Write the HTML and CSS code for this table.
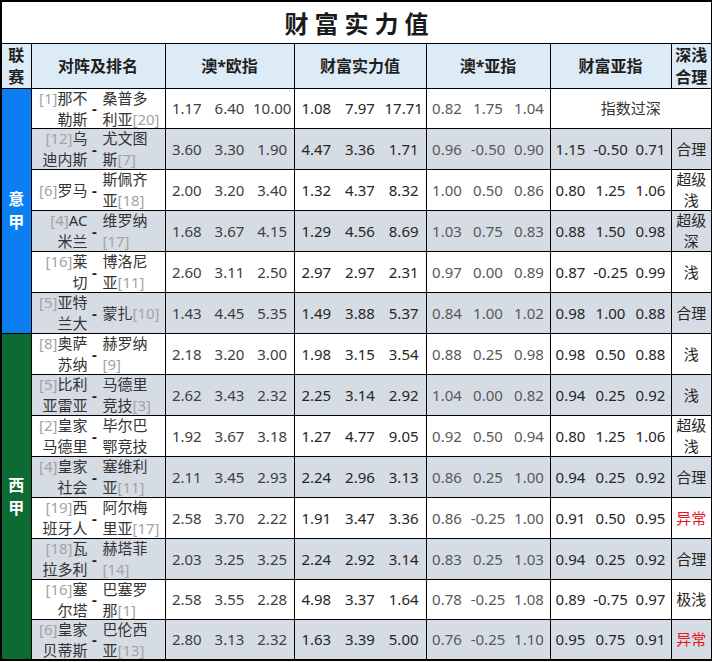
FILE: index.html
```html
<!DOCTYPE html>
<html lang="zh">
<head>
<meta charset="utf-8">
<title>财富实力值</title>
<link rel="stylesheet" href="styles.css">
</head>
<body>
<table class="sheet">
  <colgroup>
    <col class="c-lg"><col class="c-match"><col class="c-eu"><col class="c-pw"><col class="c-as"><col class="c-fa"><col class="c-dp">
  </colgroup>
  <tr class="r-title">
    <td colspan="7"><div class="cell title">财富实力值</div></td>
  </tr>
  <tr class="r-head">
    <td><div class="cell head two">联<br>赛</div></td>
    <td><div class="cell head">对阵及排名</div></td>
    <td><div class="cell head">澳*欧指</div></td>
    <td><div class="cell head">财富实力值</div></td>
    <td><div class="cell head">澳*亚指</div></td>
    <td><div class="cell head">财富亚指</div></td>
    <td><div class="cell head two">深浅<br>合理</div></td>
  </tr>

  <tr class="row h40">
    <td rowspan="6" class="league yi"><span>意<br>甲</span></td>
    <td><div class="cell match"><div class="home"><span class="rk">[1]</span>那不<br>勒斯</div><span class="dash">-</span><div class="away">桑普多<br>利亚<span class="rk">[20]</span></div></div></td>
    <td><div class="cell trio eu"><span>1.17</span><span>6.40</span><span>10.00</span></div></td>
    <td><div class="cell trio pw"><span>1.08</span><span>7.97</span><span>17.71</span></div></td>
    <td><div class="cell trio as"><span>0.82</span><span>1.75</span><span>1.04</span></div></td>
    <td colspan="2"><div class="cell note">指数过深</div></td>
  </tr>
  <tr class="row alt">
    <td><div class="cell match"><div class="home"><span class="rk">[12]</span>乌<br>迪内斯</div><span class="dash">-</span><div class="away">尤文图<br>斯<span class="rk">[7]</span></div></div></td>
    <td><div class="cell trio eu"><span>3.60</span><span>3.30</span><span>1.90</span></div></td>
    <td><div class="cell trio pw"><span>4.47</span><span>3.36</span><span>1.71</span></div></td>
    <td><div class="cell trio as"><span>0.96</span><span>-0.50</span><span>0.90</span></div></td>
    <td><div class="cell trio fa"><span>1.15</span><span>-0.50</span><span>0.71</span></div></td>
    <td><div class="cell verdict">合理</div></td>
  </tr>
  <tr class="row">
    <td><div class="cell match"><div class="home"><span class="rk">[6]</span>罗马</div><span class="dash">-</span><div class="away">斯佩齐<br>亚<span class="rk">[18]</span></div></div></td>
    <td><div class="cell trio eu"><span>2.00</span><span>3.20</span><span>3.40</span></div></td>
    <td><div class="cell trio pw"><span>1.32</span><span>4.37</span><span>8.32</span></div></td>
    <td><div class="cell trio as"><span>1.00</span><span>0.50</span><span>0.86</span></div></td>
    <td><div class="cell trio fa"><span>0.80</span><span>1.25</span><span>1.06</span></div></td>
    <td><div class="cell verdict">超级<br>浅</div></td>
  </tr>
  <tr class="row alt">
    <td><div class="cell match"><div class="home"><span class="rk">[4]</span>AC<br>米兰</div><span class="dash">-</span><div class="away">维罗纳<br><span class="rk">[17]</span></div></div></td>
    <td><div class="cell trio eu"><span>1.68</span><span>3.67</span><span>4.15</span></div></td>
    <td><div class="cell trio pw"><span>1.29</span><span>4.56</span><span>8.69</span></div></td>
    <td><div class="cell trio as"><span>1.03</span><span>0.75</span><span>0.83</span></div></td>
    <td><div class="cell trio fa"><span>0.88</span><span>1.50</span><span>0.98</span></div></td>
    <td><div class="cell verdict">超级<br>深</div></td>
  </tr>
  <tr class="row">
    <td><div class="cell match"><div class="home"><span class="rk">[16]</span>莱<br>切</div><span class="dash">-</span><div class="away">博洛尼<br>亚<span class="rk">[11]</span></div></div></td>
    <td><div class="cell trio eu"><span>2.60</span><span>3.11</span><span>2.50</span></div></td>
    <td><div class="cell trio pw"><span>2.97</span><span>2.97</span><span>2.31</span></div></td>
    <td><div class="cell trio as"><span>0.97</span><span>0.00</span><span>0.89</span></div></td>
    <td><div class="cell trio fa"><span>0.87</span><span>-0.25</span><span>0.99</span></div></td>
    <td><div class="cell verdict">浅</div></td>
  </tr>
  <tr class="row alt">
    <td><div class="cell match"><div class="home"><span class="rk">[5]</span>亚特<br>兰大</div><span class="dash">-</span><div class="away">蒙扎<span class="rk">[10]</span></div></div></td>
    <td><div class="cell trio eu"><span>1.43</span><span>4.45</span><span>5.35</span></div></td>
    <td><div class="cell trio pw"><span>1.49</span><span>3.88</span><span>5.37</span></div></td>
    <td><div class="cell trio as"><span>0.84</span><span>1.00</span><span>1.02</span></div></td>
    <td><div class="cell trio fa"><span>0.98</span><span>1.00</span><span>0.88</span></div></td>
    <td><div class="cell verdict">合理</div></td>
  </tr>

  <tr class="row">
    <td rowspan="8" class="league xi"><span>西<br>甲</span></td>
    <td><div class="cell match"><div class="home"><span class="rk">[8]</span>奥萨<br>苏纳</div><span class="dash">-</span><div class="away">赫罗纳<br><span class="rk">[9]</span></div></div></td>
    <td><div class="cell trio eu"><span>2.18</span><span>3.20</span><span>3.00</span></div></td>
    <td><div class="cell trio pw"><span>1.98</span><span>3.15</span><span>3.54</span></div></td>
    <td><div class="cell trio as"><span>0.88</span><span>0.25</span><span>0.98</span></div></td>
    <td><div class="cell trio fa"><span>0.98</span><span>0.50</span><span>0.88</span></div></td>
    <td><div class="cell verdict">浅</div></td>
  </tr>
  <tr class="row alt">
    <td><div class="cell match"><div class="home"><span class="rk">[5]</span>比利<br>亚雷亚</div><span class="dash">-</span><div class="away">马德里<br>竞技<span class="rk">[3]</span></div></div></td>
    <td><div class="cell trio eu"><span>2.62</span><span>3.43</span><span>2.32</span></div></td>
    <td><div class="cell trio pw"><span>2.25</span><span>3.14</span><span>2.92</span></div></td>
    <td><div class="cell trio as"><span>1.04</span><span>0.00</span><span>0.82</span></div></td>
    <td><div class="cell trio fa"><span>0.94</span><span>0.25</span><span>0.92</span></div></td>
    <td><div class="cell verdict">浅</div></td>
  </tr>
  <tr class="row">
    <td><div class="cell match"><div class="home"><span class="rk">[2]</span>皇家<br>马德里</div><span class="dash">-</span><div class="away">毕尔巴<br>鄂竞技</div></div></td>
    <td><div class="cell trio eu"><span>1.92</span><span>3.67</span><span>3.18</span></div></td>
    <td><div class="cell trio pw"><span>1.27</span><span>4.77</span><span>9.05</span></div></td>
    <td><div class="cell trio as"><span>0.92</span><span>0.50</span><span>0.94</span></div></td>
    <td><div class="cell trio fa"><span>0.80</span><span>1.25</span><span>1.06</span></div></td>
    <td><div class="cell verdict">超级<br>浅</div></td>
  </tr>
  <tr class="row alt">
    <td><div class="cell match"><div class="home"><span class="rk">[4]</span>皇家<br>社会</div><span class="dash">-</span><div class="away">塞维利<br>亚<span class="rk">[11]</span></div></div></td>
    <td><div class="cell trio eu"><span>2.11</span><span>3.45</span><span>2.93</span></div></td>
    <td><div class="cell trio pw"><span>2.24</span><span>2.96</span><span>3.13</span></div></td>
    <td><div class="cell trio as"><span>0.86</span><span>0.25</span><span>1.00</span></div></td>
    <td><div class="cell trio fa"><span>0.94</span><span>0.25</span><span>0.92</span></div></td>
    <td><div class="cell verdict">合理</div></td>
  </tr>
  <tr class="row">
    <td><div class="cell match"><div class="home"><span class="rk">[19]</span>西<br>班牙人</div><span class="dash">-</span><div class="away">阿尔梅<br>里亚<span class="rk">[17]</span></div></div></td>
    <td><div class="cell trio eu"><span>2.58</span><span>3.70</span><span>2.22</span></div></td>
    <td><div class="cell trio pw"><span>1.91</span><span>3.47</span><span>3.36</span></div></td>
    <td><div class="cell trio as"><span>0.86</span><span>-0.25</span><span>1.00</span></div></td>
    <td><div class="cell trio fa"><span>0.91</span><span>0.50</span><span>0.95</span></div></td>
    <td><div class="cell verdict warn">异常</div></td>
  </tr>
  <tr class="row alt">
    <td><div class="cell match"><div class="home"><span class="rk">[18]</span>瓦<br>拉多利</div><span class="dash">-</span><div class="away">赫塔菲<br><span class="rk">[14]</span></div></div></td>
    <td><div class="cell trio eu"><span>2.03</span><span>3.25</span><span>3.25</span></div></td>
    <td><div class="cell trio pw"><span>2.24</span><span>2.92</span><span>3.14</span></div></td>
    <td><div class="cell trio as"><span>0.83</span><span>0.25</span><span>1.03</span></div></td>
    <td><div class="cell trio fa"><span>0.94</span><span>0.25</span><span>0.92</span></div></td>
    <td><div class="cell verdict">合理</div></td>
  </tr>
  <tr class="row h40">
    <td><div class="cell match"><div class="home"><span class="rk">[16]</span>塞<br>尔塔</div><span class="dash">-</span><div class="away">巴塞罗<br>那<span class="rk">[1]</span></div></div></td>
    <td><div class="cell trio eu"><span>2.58</span><span>3.55</span><span>2.28</span></div></td>
    <td><div class="cell trio pw"><span>4.98</span><span>3.37</span><span>1.64</span></div></td>
    <td><div class="cell trio as"><span>0.78</span><span>-0.25</span><span>1.08</span></div></td>
    <td><div class="cell trio fa"><span>0.89</span><span>-0.75</span><span>0.97</span></div></td>
    <td><div class="cell verdict">极浅</div></td>
  </tr>
  <tr class="row alt h40">
    <td><div class="cell match"><div class="home"><span class="rk">[6]</span>皇家<br>贝蒂斯</div><span class="dash">-</span><div class="away">巴伦西<br>亚<span class="rk">[13]</span></div></div></td>
    <td><div class="cell trio eu"><span>2.80</span><span>3.13</span><span>2.32</span></div></td>
    <td><div class="cell trio pw"><span>1.63</span><span>3.39</span><span>5.00</span></div></td>
    <td><div class="cell trio as"><span>0.76</span><span>-0.25</span><span>1.10</span></div></td>
    <td><div class="cell trio fa"><span>0.95</span><span>0.75</span><span>0.91</span></div></td>
    <td><div class="cell verdict warn">异常</div></td>
  </tr>
</table>
</body>
</html>
```

FILE: styles.css
```css
html, body {
  margin: 0;
  padding: 0;
  background: #ffffff;
}

body {
  font-family: "Noto Sans", "Noto Sans CJK SC", sans-serif;
  font-size: 15px;
  color: #333333;
}

.sheet {
  border-collapse: collapse;
  table-layout: fixed;
  width: 711px;
  border: 2px solid #000000;
}

.sheet td {
  border: 1px solid #000000;
  padding: 0;
  vertical-align: middle;
}

.c-lg { width: 30px; }
.c-match { width: 134px; }
.c-eu { width: 129px; }
.c-pw { width: 132px; }
.c-as { width: 124px; }
.c-fa { width: 121px; }
.c-dp { width: 41px; }

.cell {
  height: 40px;
  display: flex;
  align-items: center;
  justify-content: center;
  overflow: hidden;
  line-height: 21px;
}

.row.h40 .cell {
  height: 39px;
}

.row.alt td {
  background: #d6dce4;
}

/* title */
.r-title .cell {
  height: 41px;
}

.title {
  font-family: "Noto Sans CJK SC", sans-serif;
  font-size: 24px;
  font-weight: 700;
  letter-spacing: 6px;
  padding-left: 6px;
  color: #1a1a1a;
}

/* header */
.r-head td {
  background: #ddebf7;
}

.head {
  height: 44px;
  font-family: "Noto Sans", "Noto Sans CJK SC", sans-serif;
  font-size: 16px;
  font-weight: 700;
  color: #1f1f1f;
  text-align: center;
}

.head.two {
  line-height: 22px;
  align-items: flex-start;
}

/* league */
.league {
  color: #ffffff;
  font-family: "Noto Sans", "Noto Sans CJK SC", sans-serif;
  font-size: 16px;
  font-weight: 700;
  line-height: 23px;
  text-align: center;
}

.league.yi { background: #0b7ff2 !important; }
.league.xi { background: #0e6a33 !important; }

/* match */
.match {
  justify-content: flex-start;
  color: #333333;
}

.home {
  width: 56px;
  text-align: right;
  flex: none;
}

.dash {
  width: 14px;
  flex: none;
  text-align: center;
  font-weight: 700;
  color: #222222;
}

.away {
  flex: 1;
  text-align: left;
  padding-left: 1px;
}

.rk {
  color: #a3a3a3;
}

/* numbers */
.trio {
  display: grid;
  grid-template-columns: repeat(3, 1fr);
  align-items: center;
  text-align: center;
}

.trio.eu { color: #404040; }
.trio.pw { color: #262626; }
.trio.as { color: #595959; }
.trio.fa { color: #262626; }

.note {
  color: #333333;
}

.verdict {
  text-align: center;
  color: #262626;
}

.verdict.warn {
  color: #e8141c;
}
```
